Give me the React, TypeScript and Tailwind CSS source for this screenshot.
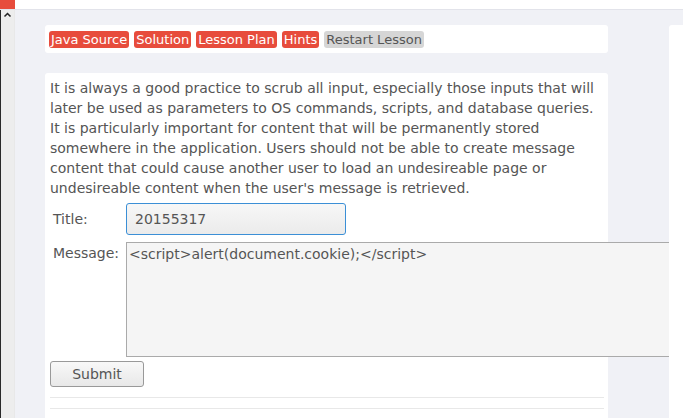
import React from 'react';

const font = { fontFamily: '"DejaVu Sans", sans-serif' };

const lessonButtons = ['Java Source', 'Solution', 'Lesson Plan', 'Hints'];

export default function App() {
  return (
    <div className="relative w-[683px] h-[418px] overflow-hidden bg-[#f0f1f6] text-[#555]" style={font}>
      {/* top bar */}
      <div className="flex h-[10px] bg-white border-b border-[#e2e3ea]">
        <div className="w-[15px] bg-[#e74c3c]" />
      </div>

      <div className="flex h-[408px]">
        {/* left scroll strip */}
        <div className="w-[15px] shrink-0 flex border-r border-[#e8e8e8]">
          <div className="w-[1px] bg-[#2a2a2a]" />
          <div className="flex-1 bg-[#ededed] flex justify-center pt-[1px]">
            <svg width="9" height="7" viewBox="0 0 9 7">
              <path d="M1.5 5.5 L4.5 2.5 L7.5 5.5" stroke="#222" strokeWidth="1.5" fill="none" />
            </svg>
          </div>
        </div>

        {/* main column */}
        <div className="flex-1 pl-[30px] pt-[15px]">
          <div className="w-[563px] h-[28px] bg-white rounded-[3px] flex items-center gap-[5px] pl-[4px]">
            {lessonButtons.map((b) => (
              <span key={b} className="h-[17px] px-[2px] rounded-[3px] bg-[#e74c3c] text-white text-[13px] leading-[17px]">
                {b}
              </span>
            ))}
            <span className="h-[17px] px-[2px] rounded-[3px] bg-[#d6d6d6] text-[#555] text-[13px] leading-[17px]">
              Restart Lesson
            </span>
          </div>

          <div className="relative mt-[20px] w-[563px] h-[360px] bg-white rounded-t-[3px] pl-[5px] pt-[5px]">
            <p className="text-[14px] leading-[20px] w-[556px]">
              It is always a good practice to scrub all input, especially those inputs that will later be used as
              parameters to OS commands, scripts, and database queries. It is particularly important for content that
              will be permanently stored somewhere in the application. Users should not be able to create message
              content that could cause another user to load an undesireable page or undesireable content when the
              user's message is retrieved.
            </p>

            <div className="flex items-center mt-[5px] pl-[3px]">
              <span className="w-[73px] shrink-0 text-[14px]">Title:</span>
              <div className="w-[220px] h-[32px] border border-[#3b8fd6] rounded-[3px] bg-gradient-to-b from-[#f7f7f7] to-[#ebebeb] text-[14px] leading-[30px] pl-[8px]">
                20155317
              </div>
            </div>

            <div className="flex mt-[7px] pl-[3px]">
              <span className="w-[73px] shrink-0 text-[14px] leading-[20px] pt-[1px]">Message:</span>
              <div className="w-[546px] h-[115px] border border-[#aaa] bg-[#f5f5f5] text-[14px] leading-[20px] pl-[2px] pt-[1px] shrink-0">
                {'<script>alert(document.cookie);</script>'}
              </div>
            </div>

            <div className="mt-[4px] w-[94px] h-[26px] border border-[#999] rounded-[3px] bg-gradient-to-b from-[#f8f8f8] to-[#e8e8e8] text-[14px] leading-[24px] text-center">
              Submit
            </div>

            <div className="mt-[10px] w-[554px] border-t border-[#e8e8e8]" />
            <div className="mt-[10px] w-[554px] border-t border-[#e8e8e8]" />
          </div>
        </div>

        {/* right panel */}
        <div className="relative w-[14px] shrink-0 mt-[15px] bg-white rounded-tl-[3px]" />
      </div>
    </div>
  );
}
